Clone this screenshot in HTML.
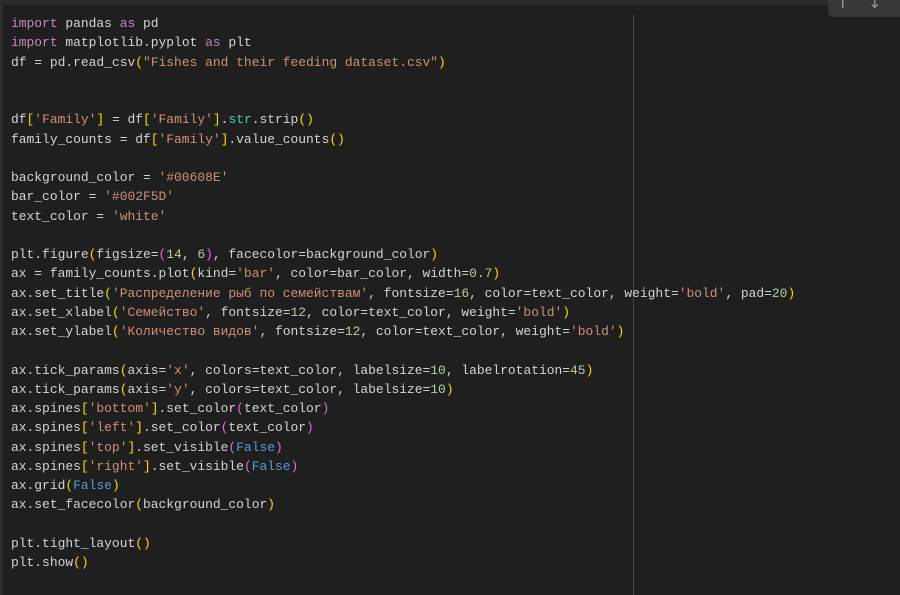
<!DOCTYPE html>
<html><head><meta charset="utf-8"><style>
html,body{margin:0;padding:0;background:#1f1f1f;width:900px;height:595px;overflow:hidden}
.top{position:absolute;left:0;top:0;width:900px;height:5px;background:#2b2b2b}
.lb{position:absolute;left:0;top:5px;width:3px;height:590px;background:#2e2e2e}
.vl{position:absolute;left:633px;top:15px;width:1px;height:580px;background:#4a4a4a}
.tb{position:absolute;left:828px;top:0;width:80px;height:17px;background:#383838;border-radius:0 0 0 6px;color:#999;font:16px "DejaVu Sans",sans-serif}
pre{position:absolute;left:11px;top:14px;margin:0;font-family:"Liberation Mono","DejaVu Sans Mono",monospace;font-size:12.95px;line-height:19.25px;color:#d4d4d4}
.k{color:#c586c0}.s{color:#ce9178}.y{color:#ffd700}.p{color:#da70d6}.t{color:#4ec9b0}.b{color:#569cd6}.n{color:#b5cea8}
</style></head><body>
<div class="top"></div><div class="lb"></div><div class="vl"></div>
<div class="tb"><span style="position:absolute;left:8px;top:-7px">↑</span><span style="position:absolute;left:40px;top:-7px">↓</span></div>
<pre><span class="k">import</span> pandas <span class="k">as</span> pd
<span class="k">import</span> matplotlib.pyplot <span class="k">as</span> plt
df = pd.read_csv<span class="y">(</span><span class="s">"Fishes and their feeding dataset.csv"</span><span class="y">)</span>


df<span class="y">[</span><span class="s">'Family'</span><span class="y">]</span> = df<span class="y">[</span><span class="s">'Family'</span><span class="y">]</span>.<span class="t">str</span>.strip<span class="y">()</span>
family_counts = df<span class="y">[</span><span class="s">'Family'</span><span class="y">]</span>.value_counts<span class="y">()</span>

background_color = <span class="s">'#00608E'</span>
bar_color = <span class="s">'#002F5D'</span>
text_color = <span class="s">'white'</span>

plt.figure<span class="y">(</span>figsize=<span class="p">(</span><span class="n">14</span>, <span class="n">6</span><span class="p">)</span>, facecolor=background_color<span class="y">)</span>
ax = family_counts.plot<span class="y">(</span>kind=<span class="s">'bar'</span>, color=bar_color, width=<span class="n">0.7</span><span class="y">)</span>
ax.set_title<span class="y">(</span><span class="s">'Распределение рыб по семействам'</span>, fontsize=<span class="n">16</span>, color=text_color, weight=<span class="s">'bold'</span>, pad=<span class="n">20</span><span class="y">)</span>
ax.set_xlabel<span class="y">(</span><span class="s">'Семейство'</span>, fontsize=<span class="n">12</span>, color=text_color, weight=<span class="s">'bold'</span><span class="y">)</span>
ax.set_ylabel<span class="y">(</span><span class="s">'Количество видов'</span>, fontsize=<span class="n">12</span>, color=text_color, weight=<span class="s">'bold'</span><span class="y">)</span>

ax.tick_params<span class="y">(</span>axis=<span class="s">'x'</span>, colors=text_color, labelsize=<span class="n">10</span>, labelrotation=<span class="n">45</span><span class="y">)</span>
ax.tick_params<span class="y">(</span>axis=<span class="s">'y'</span>, colors=text_color, labelsize=<span class="n">10</span><span class="y">)</span>
ax.spines<span class="y">[</span><span class="s">'bottom'</span><span class="y">]</span>.set_color<span class="p">(</span>text_color<span class="p">)</span>
ax.spines<span class="y">[</span><span class="s">'left'</span><span class="y">]</span>.set_color<span class="p">(</span>text_color<span class="p">)</span>
ax.spines<span class="y">[</span><span class="s">'top'</span><span class="y">]</span>.set_visible<span class="p">(</span><span class="b">False</span><span class="p">)</span>
ax.spines<span class="y">[</span><span class="s">'right'</span><span class="y">]</span>.set_visible<span class="p">(</span><span class="b">False</span><span class="p">)</span>
ax.grid<span class="y">(</span><span class="b">False</span><span class="y">)</span>
ax.set_facecolor<span class="y">(</span>background_color<span class="y">)</span>

plt.tight_layout<span class="y">()</span>
plt.show<span class="y">()</span></pre>
</body></html>
